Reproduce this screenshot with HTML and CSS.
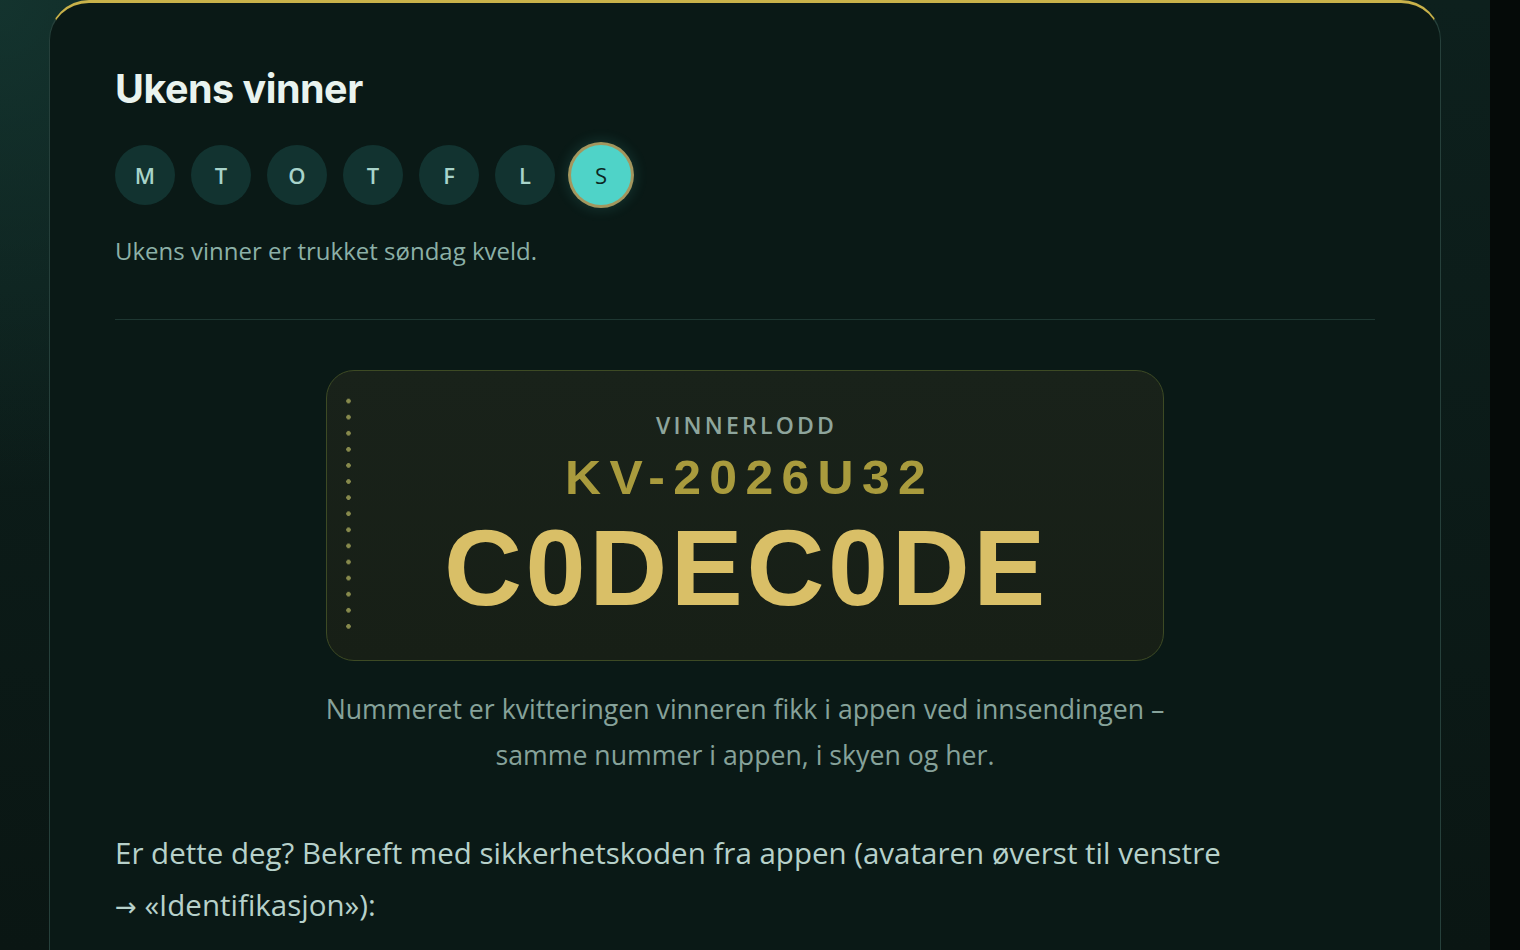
FILE: index.html
```html
<!DOCTYPE html>
<html lang="no">
<head>
<meta charset="utf-8">
<title>Ukens vinner</title>
<link rel="stylesheet" href="styles.css">
</head>
<body>
<div class="page">
  <main class="main">
    <section class="card">
      <h2 class="title">Ukens vinner</h2>
      <div class="days">
        <span class="day">M</span>
        <span class="day">T</span>
        <span class="day">O</span>
        <span class="day">T</span>
        <span class="day">F</span>
        <span class="day">L</span>
        <span class="day day-active">S</span>
      </div>
      <p class="note">Ukens vinner er trukket søndag kveld.</p>
      <hr class="divider">
      <div class="ticket">
        <div class="perf"></div>
        <div class="ticket-body">
          <div class="ticket-label">VINNERLODD</div>
          <div class="ticket-id">KV-2026U32</div>
          <div class="ticket-code">C0DEC0DE</div>
        </div>
      </div>
      <p class="caption">Nummeret er kvitteringen vinneren fikk i appen ved innsendingen – samme nummer i appen, i skyen og her.</p>
      <p class="confirm">Er dette deg? Bekreft med sikkerhetskoden fra appen (avataren øverst til venstre <span class="nowrap"><span class="arrow">→</span> «Identifikasjon»):</span></p>
    </section>
  </main>
  <div class="rail"></div>
</div>
</body>
</html>
```

FILE: styles.css
```css
html, body {
  margin: 0;
  padding: 0;
  height: 100%;
  overflow: hidden;
}
body {
  background: #0a1714;
  font-family: "Open Sans", "Noto Sans", sans-serif;
}
.page {
  display: flex;
  height: 950px;
}
.main {
  flex: 1;
  padding: 0 49px 0 49px;
  background:
    radial-gradient(ellipse 600px 700px at 0 0, rgba(22, 58, 52, 0.75), transparent 70%),
    linear-gradient(180deg, #0d201d 0%, #0a1613 100%);
  overflow: hidden;
}
.rail {
  width: 30px;
  background: #050a08;
}
.card {
  box-sizing: border-box;
  min-height: 1100px;
  border: 1px solid #26403b;
  border-top: 3px solid #c9b24a;
  border-radius: 40px 40px 0 0;
  background: #0a1916;
  padding: 64px 65px 0 65px;
}
.title {
  margin: 0;
  font-family: Inter, "Noto Sans", sans-serif;
  font-weight: 700;
  font-size: 39.5px;
  letter-spacing: -0.5px;
  line-height: 44px;
  color: #e9f3ef;
}
.days {
  display: flex;
  gap: 16px;
  margin-top: 34px;
}
.day {
  width: 60px;
  height: 60px;
  border-radius: 50%;
  background: #123330;
  color: #a8d4ca;
  display: flex;
  align-items: center;
  justify-content: center;
  font-size: 22px;
  font-weight: 600;
}
.day-active {
  background: #4fd3c8;
  color: #0c2622;
  font-weight: 500;
  box-shadow: 0 0 0 3px #a3965e, 0 0 14px 4px rgba(79, 211, 200, 0.16);
}
.note {
  margin: 30px 0 0 0;
  font-size: 24px;
  line-height: 32px;
  color: #8cb0a7;
}
.divider {
  border: 0;
  height: 1px;
  background: #1e3732;
  margin: 52px 0 0 0;
}
.ticket {
  box-sizing: border-box;
  width: 838px;
  height: 291px;
  margin: 50px auto 0 auto;
  border: 1px solid #3d4a24;
  border-radius: 28px;
  background: linear-gradient(180deg, #19221a 0%, #171f16 100%);
  display: flex;
  position: relative;
}
.perf {
  position: absolute;
  left: 19px;
  top: 22px;
  bottom: 22px;
  width: 5px;
  background-image: radial-gradient(circle, #878a4c 2px, transparent 2.5px);
  background-size: 5px 16.1px;
  background-repeat: repeat-y;
}
.ticket-body {
  flex: 1;
  display: flex;
  flex-direction: column;
  align-items: center;
  padding-top: 39px;
}
.ticket-label {
  font-size: 23px;
  letter-spacing: 3.2px;
  line-height: 30px;
  color: #8ea59c;
  font-weight: 600;
  padding-left: 3px;
}
.ticket-id {
  margin-top: 13px;
  font-family: "Liberation Sans", Arial, sans-serif;
  font-weight: 700;
  font-size: 48px;
  line-height: 50px;
  letter-spacing: 8px;
  color: #a99b3d;
  padding-left: 8px;
  transform: scaleX(1.04);
}
.ticket-code {
  margin-top: 5px;
  font-family: "Liberation Sans", Arial, sans-serif;
  font-weight: 700;
  font-size: 108px;
  line-height: 120px;
  letter-spacing: 3.6px;
  color: #d9bf67;
  padding-left: 3px;
}
.caption {
  width: 880px;
  margin: 25px auto 0 auto;
  text-align: center;
  font-size: 26.7px;
  line-height: 46px;
  color: #86a29a;
  font-weight: 400;
}
.confirm {
  margin: 49px 0 0 0;
  font-size: 29.5px;
  line-height: 52px;
  color: #b7d1ca;
}
.nowrap {
  white-space: nowrap;
}
.arrow {
  font-family: "DejaVu Sans", sans-serif;
  font-size: 26px;
}
```
